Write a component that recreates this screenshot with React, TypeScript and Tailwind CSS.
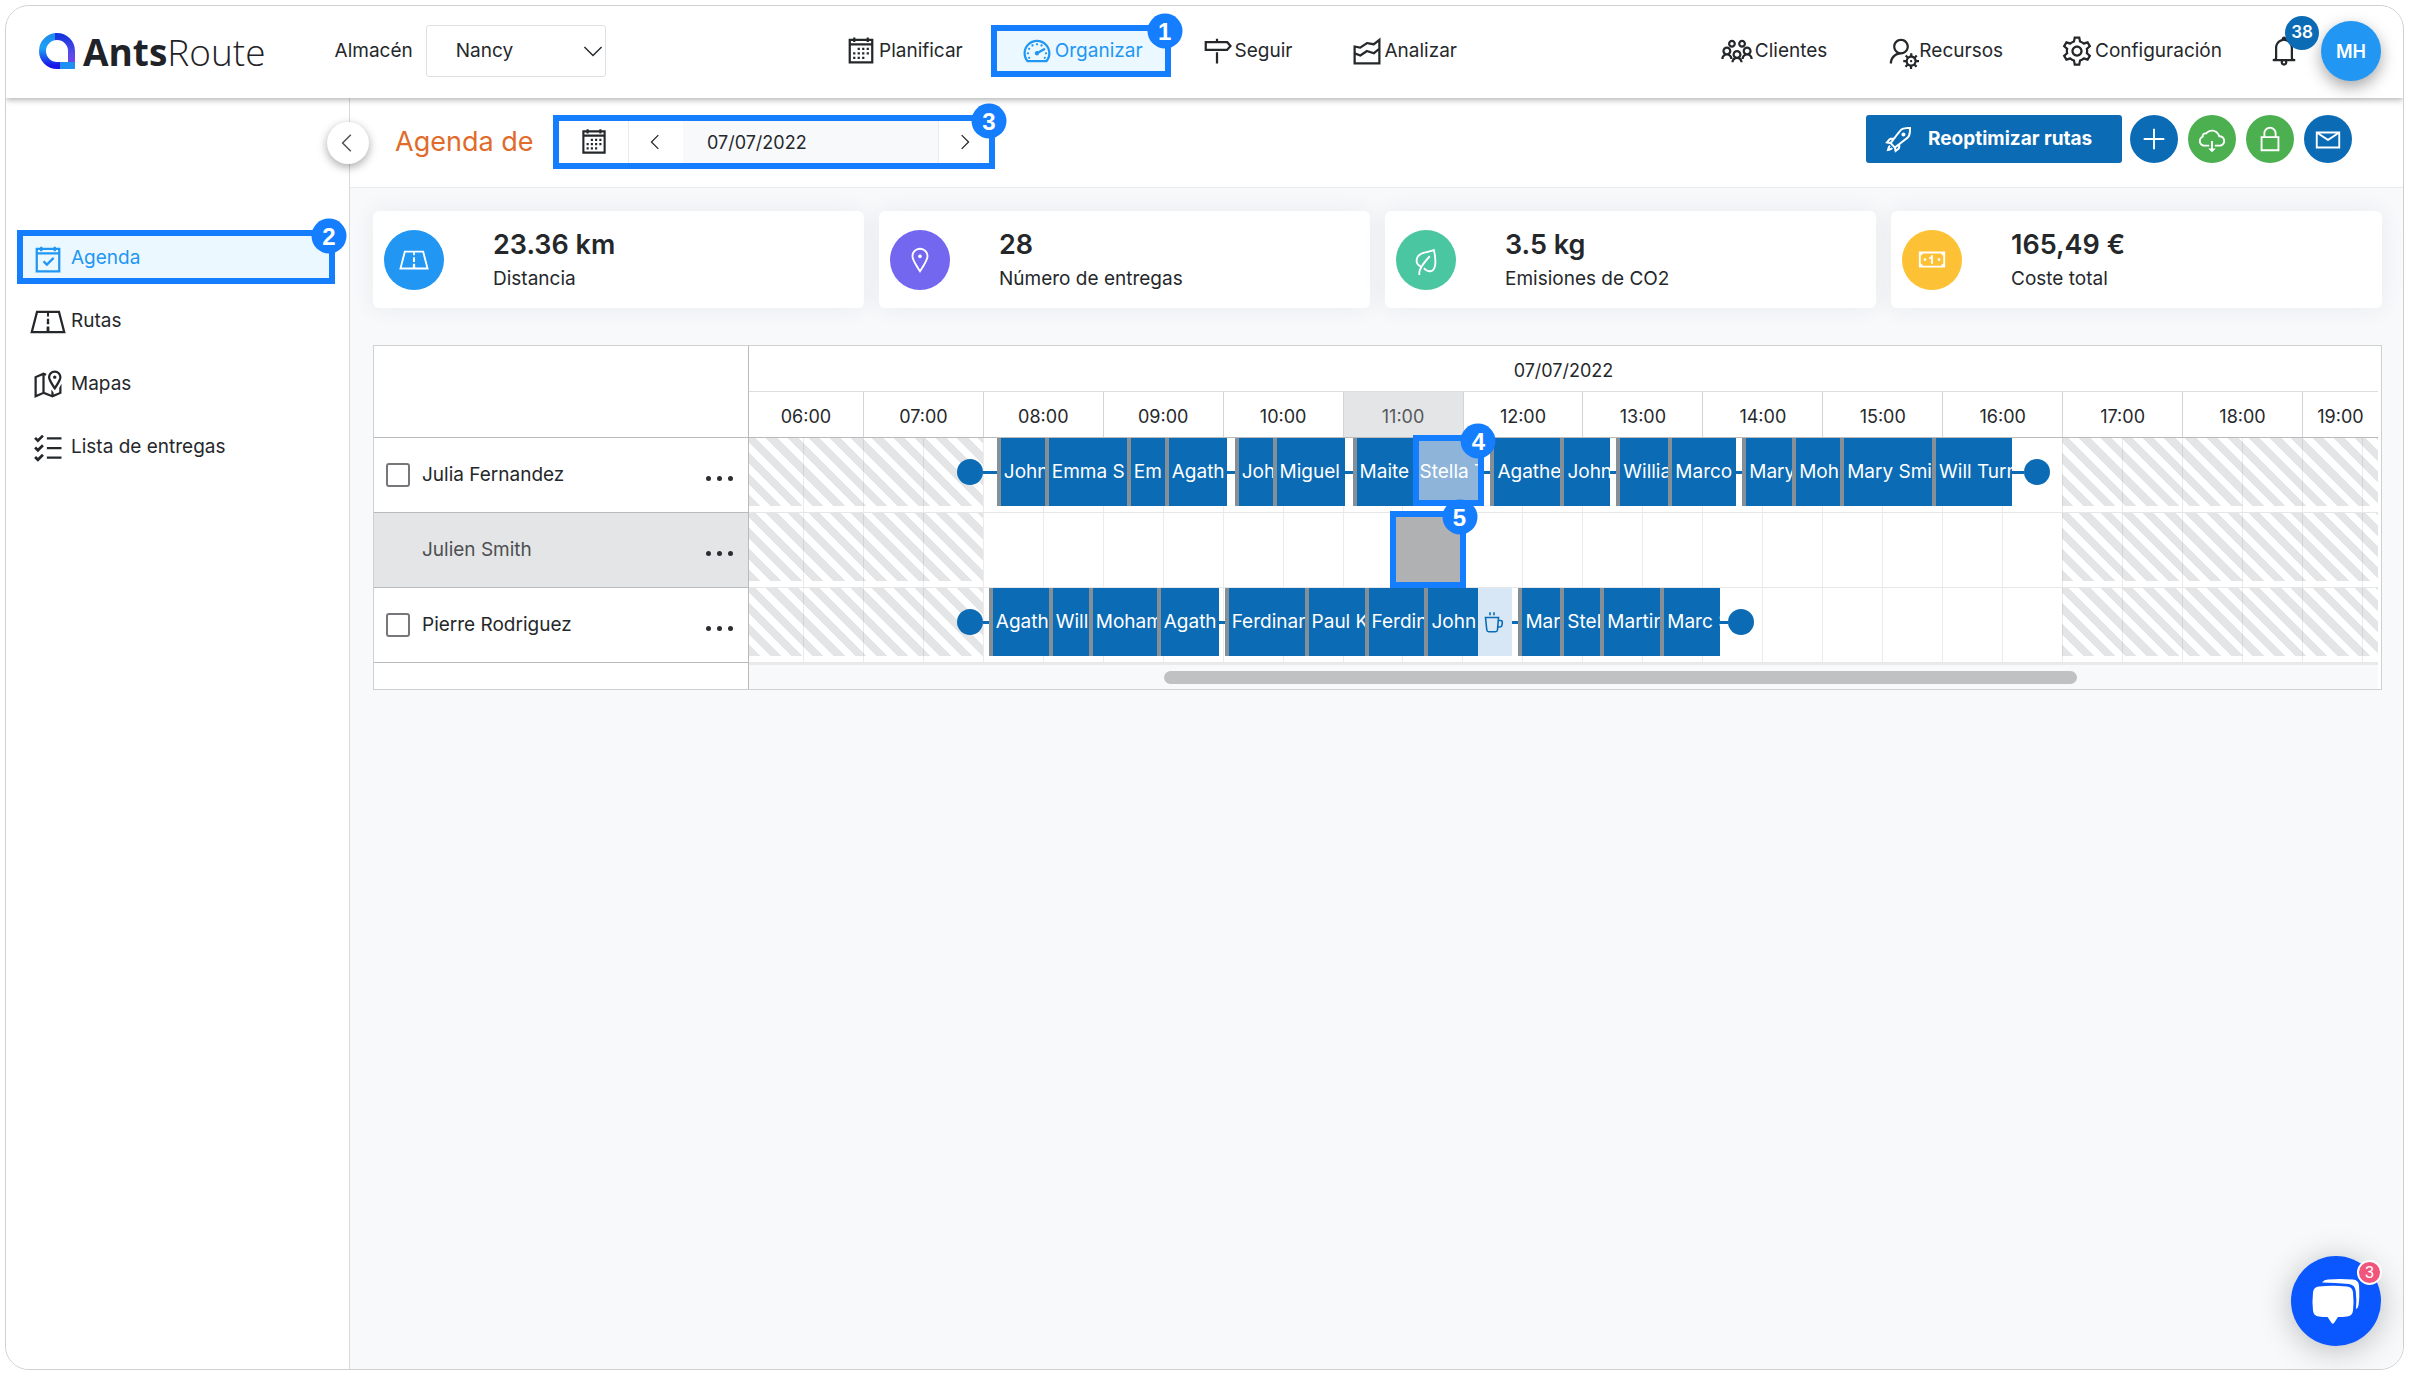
import type { ReactNode } from "react";
import clsx from "clsx";
import type { IconType } from "react-icons";
import {
  LiaAngleDownSolid,
  LiaAngleLeftSolid,
  LiaAngleRightSolid,
  LiaBell,
  LiaCalendarAlt,
  LiaCalendarCheck,
  LiaChartAreaSolid,
  LiaCloudDownloadAltSolid,
  LiaCogSolid,
  LiaEnvelope,
  LiaLeafSolid,
  LiaLockSolid,
  LiaMapMarkedAltSolid,
  LiaMapMarkerSolid,
  LiaMapSignsSolid,
  LiaMoneyBillAltSolid,
  LiaPlusSolid,
  LiaRoadSolid,
  LiaRocketSolid,
  LiaTachometerAltSolid,
  LiaUserCogSolid,
  LiaUsersSolid,
} from "react-icons/lia";

// Visible part of the day, in minutes since midnight
const VIEW_START = 363;
const VIEW_END = 1178;
const SHIFT_START = 480;
const SHIFT_END = 1020;

interface Stop {
  name: string;
  from: number;
  to: number;
  kind?: "break" | "dragged" | "drop";
}

interface Route {
  driver: string;
  depart?: number;
  arrive?: number;
  selected?: boolean;
  stops: Stop[];
}

const routes: Route[] = [
  {
    driver: "Julia Fernandez",
    depart: 467,
    arrive: 1014,
    stops: [
      { name: "John", from: 487, to: 511 },
      { name: "Emma S", from: 511, to: 552 },
      { name: "Em", from: 552, to: 571 },
      { name: "Agath", from: 571, to: 602 },
      { name: "Joh", from: 606, to: 625 },
      { name: "Miguel", from: 625, to: 661 },
      { name: "Maite", from: 665, to: 695 },
      { name: "Stella T", from: 695, to: 731, kind: "dragged" },
      { name: "Agathe", from: 734, to: 769 },
      { name: "John", from: 769, to: 794 },
      { name: "Willia", from: 797, to: 823 },
      { name: "Marco", from: 823, to: 857 },
      { name: "Mary", from: 860, to: 885 },
      { name: "Moh", from: 885, to: 909 },
      { name: "Mary Smi", from: 909, to: 955 },
      { name: "Will Turn", from: 955, to: 995 },
    ],
  },
  {
    driver: "Julien Smith",
    selected: true,
    stops: [{ name: "", from: 684, to: 721, kind: "drop" }],
  },
  {
    driver: "Pierre Rodriguez",
    depart: 467,
    arrive: 866,
    stops: [
      { name: "Agath", from: 483, to: 513 },
      { name: "Will", from: 513, to: 533 },
      { name: "Moham", from: 533, to: 567 },
      { name: "Agath", from: 567, to: 598 },
      { name: "Ferdinan", from: 601, to: 641 },
      { name: "Paul K", from: 641, to: 671 },
      { name: "Ferdin", from: 671, to: 701 },
      { name: "John", from: 701, to: 728 },
      { name: "Pausa", from: 728, to: 745, kind: "break" },
      { name: "Mar", from: 748, to: 769 },
      { name: "Stel", from: 769, to: 789 },
      { name: "Martin", from: 789, to: 819 },
      { name: "Marc S", from: 819, to: 849 },
    ],
  },
];

const stats = [
  { value: "23.36 km", label: "Distancia", icon: LiaRoadSolid, color: "bg-[#2196f3]" },
  { value: "28", label: "Número de entregas", icon: LiaMapMarkerSolid, color: "bg-[#7367f0]" },
  { value: "3.5 kg", label: "Emisiones de CO2", icon: LiaLeafSolid, color: "bg-[#4ac6a0]" },
  { value: "165,49 €", label: "Coste total", icon: LiaMoneyBillAltSolid, color: "bg-[#fdc135]" },
];

function span(from: number, to: number) {
  return { width: `${((to - from) / (VIEW_END - VIEW_START)) * 100}%` };
}

// Splits the visible range on every multiple of `step`
function ticks(step: number) {
  const cells: { from: number; to: number }[] = [];
  let from = VIEW_START;
  while (from < VIEW_END) {
    const to = Math.min((Math.floor(from / step) + 1) * step, VIEW_END);
    cells.push({ from, to });
    from = to;
  }
  return cells;
}

function Callout({ n, className }: { n: number; className?: string }) {
  return (
    <div
      className={clsx(
        "pointer-events-none absolute border-6 border-[#147eff]",
        className ?? "inset-0 z-10"
      )}
    >
      <span className="absolute top-0 right-0 flex size-[35px] translate-x-1/2 -translate-y-1/2 items-center justify-center rounded-full bg-[#147eff] font-['Liberation_Sans',sans-serif] text-[24px] font-bold text-white">
        {n}
      </span>
    </div>
  );
}

function Logo() {
  return (
    <a href="#" className="flex items-center" aria-label="AntsRoute">
      <svg viewBox="0 0 36 36" className="size-9" fill="none">
        <defs>
          <linearGradient id="logo-left" x1="0" y1="0" x2="0" y2="1">
            <stop offset="0" stopColor="#1d8df0" />
            <stop offset="0.4" stopColor="#1fa2f3" />
            <stop offset="1" stopColor="#1a16e8" />
          </linearGradient>
          <linearGradient id="logo-right" x1="0" y1="0" x2="0" y2="1">
            <stop offset="0" stopColor="#1736dc" />
            <stop offset="0.6" stopColor="#5a4bea" />
            <stop offset="1" stopColor="#7a3fe6" />
          </linearGradient>
        </defs>
        <path d="M18 3.500A14.500 14.500 0 0 0 18 32.500H24" stroke="url(#logo-left)" strokeWidth="7" />
        <path d="M16 3.500h2A14.500 14.500 0 0 1 32.500 18V32.500" stroke="url(#logo-right)" strokeWidth="7" />
        <path d="M21 29h15v7H21z" fill="#1f8ff2" />
      </svg>
      <span className="ml-2 font-['Open_Sans',sans-serif] text-[37px] leading-none text-[#1f2226]">
        <b className="font-bold">Ants</b>
        <span className="font-light">Route</span>
      </span>
    </a>
  );
}

function TasksIcon() {
  return (
    <svg viewBox="0 0 32 32" className="size-9 shrink-0" fill="none" stroke="currentColor" strokeWidth="2">
      <path d="M15 7.500h13M15 16h13M15 24.500h13" />
      <path d="M4.500 7l2.500 2.500L11.500 5M4.500 15.500L7 18l4.500-4.500M4.500 24L7 26.500l4.500-4.500" strokeWidth="2.400" />
    </svg>
  );
}

function CupIcon() {
  return (
    <svg viewBox="0 0 20 22" className="h-[22px] w-5" fill="none" stroke="#0b6bb5" strokeWidth="1.600">
      <path d="M1.500 6.500h13l-1 12.500q-.2 1.700-2 1.700H4.800q-1.800 0-2-1.700zM14.500 9.500h2q2 0 1.800 2.200l-.3 2.300q-.3 2-2.300 2h-1.900M6 1.200v3M10 1.200v3" />
    </svg>
  );
}

function ChatIcon() {
  return (
    <svg viewBox="0 0 90 90" className="size-[90px]" fill="#fff">
      <path d="M28 30.500q14-1.500 28 0 5.500.5 6 6 1 9 0 18-.5 5.500-6 6-4 .5-9 .5l-4 6q-1.200 1.500-2.400 0l-4-6q-5 0-8.600-.5-5.500-.5-6-6-1-9 0-18 .5-5.500 6-6z" />
      <path d="M31 26.500q2-2.800 6-3 12-1 25 0 5.500.4 6 6 .8 12-.5 20-.5 2.500-2.500 3.500.8-10-.3-18-.8-6.500-7-7-13-1.500-26.700-1.500z" />
    </svg>
  );
}

interface NavLinkProps {
  icon: IconType;
  label: string;
  active?: boolean;
  children?: ReactNode;
}

function NavLink({ icon: Icon, label, active, children }: NavLinkProps) {
  return (
    <a
      href="#"
      className={clsx(
        "relative flex h-[52px] items-center px-7",
        active && "bg-[#ecf8ff] text-[#2196f3]"
      )}
    >
      <Icon className="size-9 shrink-0" />
      {label}
      {children}
    </a>
  );
}

function Header() {
  return (
    <header className="relative z-30 flex h-[92px] shrink-0 items-center bg-white pb-[2px] shadow-[0_2px_6px_rgba(0,0,0,0.3)]">
      <div className="flex w-[809px] shrink-0 items-center pl-[33px]">
        <Logo />
        <label htmlFor="warehouse" className="ml-[69px]">
          Almacén
        </label>
        <div className="relative ml-[13px] h-[52px] w-[180px]">
          <select
            id="warehouse"
            className="size-full appearance-none rounded-[3px] border border-[#dee0e3] bg-white pl-[29px]"
          >
            <option>Nancy</option>
          </select>
          <LiaAngleDownSolid className="pointer-events-none absolute top-[14px] right-[2px] size-[22px]" />
        </div>
      </div>
      <nav className="flex">
        <NavLink icon={LiaCalendarAlt} label="Planificar" />
        <NavLink icon={LiaTachometerAltSolid} label="Organizar" active>
          <Callout n={1} />
        </NavLink>
        <NavLink icon={LiaMapSignsSolid} label="Seguir" />
        <NavLink icon={LiaChartAreaSolid} label="Analizar" />
      </nav>
      <nav className="ml-auto flex">
        <NavLink icon={LiaUsersSolid} label="Clientes" />
        <NavLink icon={LiaUserCogSolid} label="Recursos" />
        <NavLink icon={LiaCogSolid} label="Configuración" />
      </nav>
      <button type="button" aria-label="Notificaciones" className="relative ml-4 size-9">
        <LiaBell className="size-9" />
        <span className="absolute -top-[17px] left-[19px] flex size-[34px] items-center justify-center rounded-full bg-[#0b6bb5] text-[17px] font-semibold text-white">
          38
        </span>
      </button>
      <button
        type="button"
        className="mr-[22px] ml-[19px] size-[60px] rounded-full bg-[#2196f3] text-[18px] font-semibold text-white shadow-[0_6px_16px_rgba(0,0,0,0.35)]"
      >
        MH
      </button>
    </header>
  );
}

function SideLink({ icon, label, active, children }: { icon: ReactNode; label: string; active?: boolean; children?: ReactNode }) {
  return (
    <a
      href="#"
      className={clsx(
        "relative flex h-[54px] items-center gap-[5px] px-[13px] pt-[3px]",
        active && "bg-[#ecf8ff] text-[#2196f3]"
      )}
    >
      {icon}
      {label}
      {children}
    </a>
  );
}

function Sidebar() {
  return (
    <aside className="relative w-[344px] shrink-0 border-r border-[#d9dadc] bg-white pt-[132px] pr-[14px] pl-[11px]">
      <button
        type="button"
        aria-label="Contraer menú"
        className="absolute top-6 -right-5 z-20 flex size-[42px] items-center justify-center rounded-full bg-white text-[#555] shadow-[0_3px_10px_rgba(0,0,0,0.35)]"
      >
        <LiaAngleLeftSolid className="size-6" />
      </button>
      <nav className="flex flex-col gap-[9px]">
        <SideLink icon={<LiaCalendarCheck className="size-9" />} label="Agenda" active>
          <Callout n={2} />
        </SideLink>
        <SideLink icon={<LiaRoadSolid className="size-9" />} label="Rutas" />
        <SideLink icon={<LiaMapMarkedAltSolid className="size-9" />} label="Mapas" />
        <SideLink icon={<TasksIcon />} label="Lista de entregas" />
      </nav>
    </aside>
  );
}

function RoundButton({ icon: Icon, label, color }: { icon: IconType; label: string; color: string }) {
  return (
    <button
      type="button"
      aria-label={label}
      className={clsx("flex size-12 items-center justify-center rounded-full text-white", color)}
    >
      <Icon className="size-[30px]" />
    </button>
  );
}

function Toolbar() {
  return (
    <div className="flex h-[90px] items-start border-b border-[#e9eaec] bg-white pt-[17px] pr-[51px] pl-[45px]">
      <h1 className="w-[158px] shrink-0 text-[27px] leading-[54px] text-[#e06b2a]">Agenda de</h1>
      <div className="relative flex h-[54px] w-[442px] items-stretch p-[6px]">
        <button type="button" aria-label="Calendario" className="flex w-[70px] items-center justify-center border-r border-[#e9eaec]">
          <LiaCalendarAlt className="size-[34px]" />
        </button>
        <button type="button" aria-label="Día anterior" className="flex w-[54px] items-center justify-center">
          <LiaAngleLeftSolid className="size-5" />
        </button>
        <input
          type="text"
          aria-label="Fecha"
          defaultValue="07/07/2022"
          className="w-0 flex-1 border-r border-[#e9eaec] bg-[#f8f9fb] pl-6 text-[18px]"
        />
        <button type="button" aria-label="Día siguiente" className="flex w-[50px] items-center justify-center">
          <LiaAngleRightSolid className="size-5" />
        </button>
        <Callout n={3} />
      </div>
      <div className="ml-auto flex gap-[10px]">
        <button
          type="button"
          className="mr-[-2px] flex h-12 w-[256px] items-center gap-[13px] rounded-[3px] bg-[#0b6bb5] pl-[17px] text-[19px] font-bold text-white"
        >
          <LiaRocketSolid className="size-8" />
          Reoptimizar rutas
        </button>
        <RoundButton icon={LiaPlusSolid} label="Añadir" color="bg-[#0b6bb5]" />
        <RoundButton icon={LiaCloudDownloadAltSolid} label="Descargar" color="bg-[#4caf50]" />
        <RoundButton icon={LiaLockSolid} label="Bloquear" color="bg-[#4caf50]" />
        <RoundButton icon={LiaEnvelope} label="Enviar" color="bg-[#0b6bb5]" />
      </div>
    </div>
  );
}

function Stats() {
  return (
    <div className="grid grid-cols-4 gap-[15px]">
      {stats.map(({ value, label, icon: Icon, color }) => (
        <div
          key={label}
          className="flex h-[97px] items-center gap-[49px] rounded-md bg-white px-[11px] shadow-[0_0_24px_rgba(30,40,60,0.07)]"
        >
          <span className={clsx("flex size-[60px] items-center justify-center rounded-full text-white", color)}>
            <Icon className="size-[30px]" />
          </span>
          <div className="pt-[5px]">
            <p className="text-[27px] leading-[34px] font-semibold">{value}</p>
            <p className="leading-[34px]">{label}</p>
          </div>
        </div>
      ))}
    </div>
  );
}

function StopBlock({ stop }: { stop: Stop }) {
  if (stop.kind === "break") {
    return (
      <div
        title={stop.name}
        style={span(stop.from, stop.to)}
        className="flex h-[68px] shrink-0 items-center bg-[#d7e7f5] pl-[6px]"
      >
        <CupIcon />
      </div>
    );
  }
  if (stop.kind === "drop") {
    return (
      <div style={span(stop.from, stop.to)} className="relative h-[74px] shrink-0 bg-[#b0b1b3]">
        <Callout n={5} className="-inset-x-px -top-[2px] -bottom-[1px] z-10" />
      </div>
    );
  }
  const dragged = stop.kind === "dragged";
  return (
    <div
      style={span(stop.from, stop.to)}
      className={clsx(
        "relative flex h-[68px] shrink-0 items-center border-l-4 border-[#858f98] pl-[3px] text-white",
        dragged ? "bg-[#8fb4d9]" : "bg-[#0b6bb5]"
      )}
    >
      <span className="overflow-hidden whitespace-nowrap">{stop.name}</span>
      {dragged && <Callout n={4} className="-top-[3px] right-0 bottom-0 -left-1 z-20" />}
    </div>
  );
}

function Leg({ from, to, end }: { from: number; to: number; end?: "depart" | "arrive" }) {
  return (
    <div
      style={span(from, to)}
      className={clsx("flex h-[68px] shrink-0 items-center", end === "arrive" && "flex-row-reverse")}
    >
      {end && <span className="size-[26px] shrink-0 rounded-full bg-[#0b6bb5]" />}
      <span className="h-[3px] flex-1 bg-[#0b6bb5]" />
    </div>
  );
}

function OffHours({ from, to }: { from: number; to: number }) {
  return (
    <div
      style={span(from, to)}
      className="bg-[repeating-linear-gradient(45deg,#e4e5e7_0px,#e4e5e7_8px,transparent_8px,transparent_15px)]"
    />
  );
}

function TimelineRow({ route }: { route: Route }) {
  const first = route.stops[0];
  const last = route.stops[route.stops.length - 1];
  return (
    <div className="grid h-[75px] grid-cols-1 grid-rows-1 border-b border-[#e6e7e9]">
      <div className="col-start-1 row-start-1 flex h-[68px] justify-between">
        <OffHours from={VIEW_START} to={SHIFT_START} />
        <OffHours from={SHIFT_END} to={VIEW_END} />
      </div>
      <div className="col-start-1 row-start-1 flex">
        {ticks(30).map(({ from, to }) => (
          <div key={from} style={span(from, to)} className="border-l border-black/8 first:border-l-0" />
        ))}
      </div>
      <div className="col-start-1 row-start-1 flex min-w-0">
        <div style={span(VIEW_START, route.depart ?? first.from)} className="shrink-0" />
        {route.depart && <Leg from={route.depart} to={first.from} end="depart" />}
        {route.stops.map((stop, i) => {
          const previous = route.stops[i - 1];
          return [
            previous && previous.to < stop.from && (
              <Leg key={`leg-${stop.from}`} from={previous.to} to={stop.from} />
            ),
            <StopBlock key={stop.from} stop={stop} />,
          ];
        })}
        {route.arrive && <Leg from={last.to} to={route.arrive} end="arrive" />}
      </div>
    </div>
  );
}

function DriverCell({ route }: { route: Route }) {
  return (
    <div
      className={clsx(
        "flex h-[75px] items-center border-b border-[#b9babc] px-3",
        route.selected && "bg-[#e4e5e7] text-[#4d4f52]"
      )}
    >
      <label className="flex flex-1 items-center">
        <span className="mr-3 flex w-6">
          {!route.selected && (
            <input
              type="checkbox"
              className="size-6 appearance-none rounded-[3px] border-2 border-[#75777a] bg-white"
            />
          )}
        </span>
        {route.driver}
      </label>
      <button type="button" aria-label={`Opciones de ${route.driver}`} className="mt-[6px] flex gap-[6px] px-[3px]">
        <span className="size-[5px] rounded-full bg-[#2b2d30]" />
        <span className="size-[5px] rounded-full bg-[#2b2d30]" />
        <span className="size-[5px] rounded-full bg-[#2b2d30]" />
      </button>
    </div>
  );
}

function Planner() {
  return (
    <section className="mt-[37px] flex border border-[#cfd0d2] bg-white">
      <div className="w-[375px] shrink-0 border-r border-[#b9babc]">
        <div className="h-[92px] border-b border-[#b9babc]" />
        {routes.map((route) => (
          <DriverCell key={route.driver} route={route} />
        ))}
      </div>
      <div className="mr-[3px] min-w-0 flex-1">
        <div className="flex h-[46px] items-center justify-center border-b border-[#dcdddf] pt-[3px] text-[18px]">
          07/07/2022
        </div>
        <div className="flex h-[46px] border-b border-[#b9babc]">
          {ticks(60).map(({ from, to }) => (
            <div
              key={from}
              style={span(from, to)}
              className={clsx(
                "flex items-center justify-center border-l border-[#d3d4d6] pt-[3px] text-[18px] first:border-l-0",
                from === 660 && "bg-[#e4e5e7] text-[#55575a]"
              )}
            >
              {String(Math.floor(from / 60)).padStart(2, "0")}:00
            </div>
          ))}
        </div>
        {routes.map((route) => (
          <TimelineRow key={route.driver} route={route} />
        ))}
        <div className="flex h-[26px] items-center border-t-2 border-[#e9eaec] bg-[#f8f9fb]">
          <div className="ml-[25.5%] h-[13px] w-[56%] rounded-full bg-[#c0c1c3]" />
        </div>
      </div>
    </section>
  );
}

export default function App() {
  return (
    <div className="flex min-h-screen bg-white p-[5px] pb-1 font-['Inter','Noto_Sans',sans-serif] text-[19px] text-[#25282b]">
      <div className="relative flex flex-1 flex-col overflow-hidden rounded-3xl border border-[#cfd0d2]">
        <Header />
        <div className="flex flex-1">
          <Sidebar />
          <main className="min-w-0 flex-1 bg-[#f8f9fb]">
            <Toolbar />
            <div className="py-[23px] pr-[21px] pl-[23px]">
              <Stats />
              <Planner />
            </div>
          </main>
        </div>
        <button
          type="button"
          aria-label="Abrir chat"
          className="absolute right-[22px] bottom-[23px] z-40 size-[90px] rounded-full bg-[#0b57ff] shadow-[0_4px_32px_rgba(0,0,0,0.25)]"
        >
          <ChatIcon />
          <span className="absolute top-1 -right-[1px] flex size-[25px] items-center justify-center rounded-full border-2 border-white bg-[#f0557b] font-['Liberation_Sans',sans-serif] text-[16px] text-white">
            3
          </span>
        </button>
      </div>
    </div>
  );
}
